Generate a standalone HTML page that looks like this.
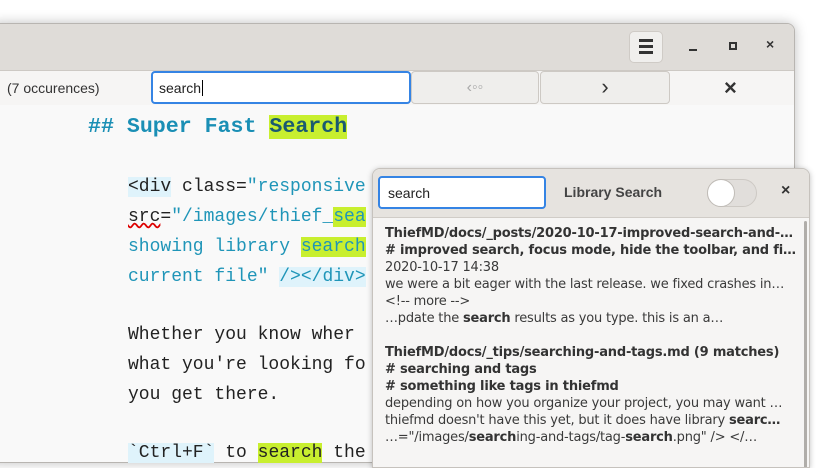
<!DOCTYPE html>
<html><head><style>
*{margin:0;padding:0;box-sizing:border-box}
body{width:825px;height:451px;background:#fff;position:relative;overflow:hidden;font-family:"Liberation Sans",sans-serif}
.win{position:absolute;left:-10px;top:23px;width:805px;height:440px;background:#f9f9f9;border:1px solid #b8b5b1;border-radius:8px 8px 0 0;box-shadow:0 0 12px rgba(0,0,0,.25);overflow:hidden}
.title{position:absolute;left:0;top:0;width:100%;height:47px;background:#dfdcd8;border-bottom:1px solid #cdc9c4}
.bar{position:absolute;left:0;top:47px;width:100%;height:34px;background:#f6f5f4}
.mono{font-family:"Liberation Mono",monospace;font-size:18px;position:absolute;left:128px;white-space:pre;color:#222}
.c{color:#1f95b8}.hl{background:#c8ef2f}.bl{background:#dff3fb}
.pop{position:absolute;left:372px;top:168px;width:438px;height:300px;background:#f6f5f4;border:1px solid #c6c2bd;border-radius:8px 8px 0 0;box-shadow:0 1px 6px rgba(0,0,0,.25);overflow:hidden}
.ph{height:49px;background:#e6e3df;border-bottom:1px solid #d0ccc7;position:relative}
.res{position:absolute;left:12px;font-family:"DejaVu Sans",sans-serif;font-size:13px;line-height:17px;color:#3a3a3a;white-space:nowrap;letter-spacing:-0.2px}
.res b{color:#333}
</style></head><body>
<div class="win">
 <div class="title">
  <div style="position:absolute;left:638px;top:7px;width:34px;height:32px;background:#f0efed;border:1px solid #cfcbc6;border-radius:5px"></div>
  <div style="position:absolute;left:648px;top:15px;width:14px;height:3px;background:#333;box-shadow:0 6px 0 #333,0 12px 0 #333"></div>
  <div style="position:absolute;left:698px;top:25px;width:8px;height:2px;background:#333"></div>
  <div style="position:absolute;left:738px;top:18px;width:8px;height:8px;border:2px solid #333"></div>
  <div style="position:absolute;left:775px;top:12px;font-size:14px;font-weight:bold;color:#333">×</div>
 </div>
 <div class="bar">
  <div style="position:absolute;left:16px;top:9px;font-size:14px;color:#333">(7 occurences)</div>
  <div style="position:absolute;left:160px;top:0;width:260px;height:33px;background:#fff;border:2px solid #3584e4;border-radius:4px;font-size:14px;padding:7px 6px;color:#222">search<span style="border-left:1px solid #000;margin-left:1px"></span></div>
  <div style="position:absolute;left:420px;top:0;width:128px;height:33px;background:#efeeec;border:1px solid #cdc9c4;border-radius:4px;color:#aaa;text-align:center;font-size:16px;line-height:31px">‹◦◦</div>
  <div style="position:absolute;left:549px;top:0;width:130px;height:33px;background:#efeeec;border:1px solid #cdc9c4;border-radius:4px;text-align:center;font-size:22px;line-height:30px;color:#333">›</div>
  <div style="position:absolute;left:733px;top:4px;font-size:22px;font-weight:bold;color:#333">×</div>
 </div>
</div>
<div class="mono" style="left:88px;top:115px;font-size:21.6px;font-weight:bold;color:#1a8fb5">## Super Fast <span class="hl" style="color:#1a5a70">Search</span></div>
<div class="mono" style="top:177px"><span class="bl">&lt;div</span> class=<span class="c">"responsive</span></div>
<div class="mono" style="top:207px"><span style="text-decoration:underline wavy #d00">src</span>=<span class="c">"/images/thief_</span><span class="hl c">sea</span></div>
<div class="mono c" style="top:237px">showing library <span class="hl">search</span></div>
<div class="mono c" style="top:267px">current file" <span class="bl">/&gt;&lt;/div&gt;</span></div>
<div class="mono" style="top:325px">Whether you know wher</div>
<div class="mono" style="top:355px">what you're looking fo</div>
<div class="mono" style="top:385px">you get there.</div>
<div class="mono" style="top:443px"><span class="bl">`Ctrl+F`</span> to <span class="hl">search</span> the</div>
<div class="pop">
 <div class="ph">
  <div style="position:absolute;left:5px;top:7px;width:168px;height:33px;background:#fff;border:2px solid #3584e4;border-radius:4px;font-size:14px;padding:7px 8px;color:#222">search</div>
  <div style="position:absolute;left:191px;top:15px;font-size:14px;font-weight:bold;color:#444">Library Search</div>
  <div style="position:absolute;left:334px;top:10px;width:50px;height:28px;background:#e1dedb;border:1px solid #cdc9c4;border-radius:14px"></div>
  <div style="position:absolute;left:334px;top:10px;width:28px;height:28px;background:#fff;border:1px solid #c0bcb7;border-radius:50%"></div>
  <div style="position:absolute;left:408px;top:13px;font-size:16px;font-weight:bold;color:#333">×</div>
 </div>
 <div style="position:absolute;right:2px;top:52px;width:3px;height:250px;background:#b0ada9;border-radius:2px"></div>
 <div class="res" style="top:56px">
  <b>ThiefMD/docs/_posts/2020-10-17-improved-search-and-…</b><br>
  <b># improved search, focus mode, hide the toolbar, and fi…</b><br>
  2020-10-17 14:38<br>
  we were a bit eager with the last release. we fixed crashes in…<br>
  &lt;!-- more --&gt;<br>
  …pdate the <b>search</b> results as you type. this is an a…<br><br>
  <b>ThiefMD/docs/_tips/searching-and-tags.md (9 matches)</b><br>
  <b># searching and tags</b><br>
  <b># something like tags in thiefmd</b><br>
  depending on how you organize your project, you may want …<br>
  thiefmd doesn't have this yet, but it does have library <b>searc…</b><br>
  …="/images/<b>search</b>ing-and-tags/tag-<b>search</b>.png" /&gt; &lt;/…
 </div>
</div>
</body></html>
